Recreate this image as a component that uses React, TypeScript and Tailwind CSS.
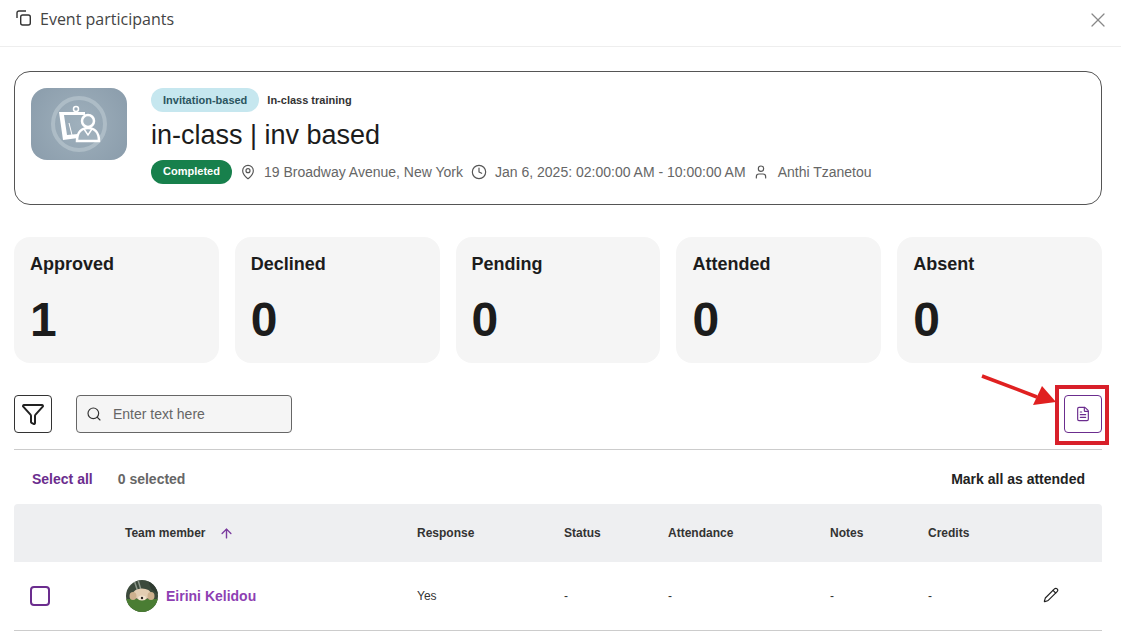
import { ArrowUp, Clock, FileText, Funnel, MapPin, Pencil, Search, User, X } from 'lucide-react';

const stats = [
  { label: 'Approved', value: 1 },
  { label: 'Declined', value: 0 },
  { label: 'Pending', value: 0 },
  { label: 'Attended', value: 0 },
  { label: 'Absent', value: 0 },
];

const tableCols = 'grid grid-cols-[111px_292px_147px_104px_162px_98px_115px_1fr] items-center';

function Thumbnail() {
  return (
    <div className="w-24 h-[72px] rounded-2xl bg-[radial-gradient(circle,#9fb0bc_0%,#8a9cab_100%)] flex items-center justify-center shrink-0">
      <svg width="60" height="60" viewBox="0 0 60 60" fill="none">
        <circle cx="30" cy="30" r="26" stroke="#adbcc6" strokeWidth="4" />
        <circle cx="27" cy="15" r="2.5" stroke="#fff" strokeWidth="1.5" />
        <path d="M10 18 L36 18 L36 21 L15 21 L18 41 L29 40 L29 44 L14 46 Z" fill="#fff" />
        <path d="M20 29 L23 41" stroke="#fff" strokeWidth="1" />
        <circle cx="39" cy="27" r="6" fill="#a4b4bf" stroke="#fff" strokeWidth="2.5" />
        <path d="M28 47 C28 38 33 34 39 34 C45 34 50 38 50 47 Z" fill="#9fb0bc" stroke="#fff" strokeWidth="2.5" />
        <path d="M35 35 L39 41 L43 35" stroke="#fff" strokeWidth="1.5" />
      </svg>
    </div>
  );
}

function Avatar() {
  return (
    <svg width="32" height="32" viewBox="0 0 32 32" className="rounded-full shrink-0">
      <rect width="32" height="32" fill="#3c4a3c" />
      <rect y="19" width="32" height="13" fill="#4a7d33" />
      <path d="M8 0 L12 12 M12 0 L15 10" stroke="#8c968a" strokeWidth="1.5" />
      <path d="M22 0 H32 V14 L25 9 Z" fill="#2f3a30" />
      <ellipse cx="16" cy="14" rx="9" ry="5.5" fill="#e3cdb2" />
      <ellipse cx="7" cy="16" rx="3.5" ry="4" fill="#cdb08e" />
      <ellipse cx="25" cy="16" rx="3.5" ry="4" fill="#cdb08e" />
      <ellipse cx="16" cy="18" rx="4" ry="2.5" fill="#f1e3cf" />
      <circle cx="16" cy="18" r="1.2" fill="#2e2320" />
    </svg>
  );
}

export default function App() {
  return (
    <div className="relative w-[1121px] h-[632px] overflow-hidden bg-white font-['Liberation_Sans',Arial,sans-serif] text-[#1c1c1c]">
      <header className="h-[47px] border-b border-[#eeeeee] pl-4 pr-[11px] pb-[9px] flex items-center justify-between">
        <div className="flex items-center gap-2">
          <svg width="16" height="16" viewBox="0 0 16 16" fill="none" stroke="#333" strokeWidth="1.4" className="-mt-[2px]">
            <rect x="4.7" y="5" width="9.6" height="10" rx="2" />
            <path d="M1 8 V3 a2 2 0 0 1 2-2 H10" />
          </svg>
          <span className="font-['Open_Sans',sans-serif] text-base text-[#444]">Event participants</span>
        </div>
        <X className="w-6 h-6 text-[#888] mt-[3px]" strokeWidth={1.25} />
      </header>

      <div className="px-[14px] pr-[19px]">
        <section className="mt-6 h-[134px] border border-[#555] rounded-2xl pl-4 pt-4 flex gap-6">
          <Thumbnail />
          <div>
            <div className="flex items-center gap-2">
              <span className="h-6 px-3 rounded-full bg-[#c6e7ef] text-[11px] font-bold text-[#2b5560] flex items-center">Invitation-based</span>
              <span className="text-[11px] font-bold text-[#333]">In-class training</span>
            </div>
            <h1 className="text-[27px] leading-8 mt-[7px] text-[#1c1c1c]">in-class | inv based</h1>
            <div className="flex items-center mt-[9px] text-sm text-[#666]">
              <span className="h-6 w-[81px] rounded-full bg-[#17804c] text-[11px] font-bold text-white flex items-center justify-center">Completed</span>
              <MapPin className="w-4 h-4 ml-2 text-[#555]" strokeWidth={1.75} />
              <span className="ml-2">19 Broadway Avenue, New York</span>
              <Clock className="w-4 h-4 ml-2 text-[#555]" strokeWidth={1.75} />
              <span className="ml-2">Jan 6, 2025: 02:00:00 AM - 10:00:00 AM</span>
              <User className="w-4 h-4 ml-2 -translate-x-[1px] text-[#555]" strokeWidth={1.75} />
              <span className="ml-2">Anthi Tzanetou</span>
            </div>
          </div>
        </section>

        <section className="grid grid-cols-5 gap-4 mt-8">
          {stats.map((s) => (
            <div key={s.label} className="h-[126px] rounded-2xl bg-[#f5f5f5] px-4 pt-[17px]">
              <div className="text-lg leading-5 font-bold">{s.label}</div>
              <div className="text-[48px] leading-[56px] font-bold mt-[18px]">{s.value}</div>
            </div>
          ))}
        </section>

        <section className="flex items-center justify-between mt-8">
          <div className="flex items-center gap-6">
            <button className="w-[38px] h-[38px] border border-[#333] rounded flex items-center justify-center">
              <Funnel className="w-6 h-6 text-[#222]" strokeWidth={2} />
            </button>
            <div className="w-[216px] h-[38px] border border-[#666] rounded bg-[#f5f5f5] flex items-center pl-[9px] gap-[11px]">
              <Search className="w-4 h-4 text-[#333]" strokeWidth={1.75} />
              <span className="text-sm text-[#666]">Enter text here</span>
            </div>
          </div>
          <button className="w-[38px] h-[38px] border border-[#6b2d8e] rounded flex items-center justify-center">
            <FileText className="w-4 h-4 text-[#6b2d8e]" strokeWidth={1.75} />
          </button>
        </section>

        <div className="border-b border-[#cccccc] mt-4" />

        <section className="h-[54px] pt-1 pl-[18px] pr-[17px] flex items-center text-sm font-bold">
          <span className="text-[#6b2d8e]">Select all</span>
          <span className="ml-[25px] text-[#666]">0 selected</span>
          <span className="ml-auto text-[#222]">Mark all as attended</span>
        </section>

        <section className={`${tableCols} h-[58px] bg-[#eeeff1] rounded-t text-xs font-bold text-[#333]`}>
          <div />
          <div className="flex items-center gap-[14px]">
            Team member
            <ArrowUp className="w-[15px] h-[15px] text-[#7a3a9e]" strokeWidth={2.25} />
          </div>
          <div>Response</div>
          <div>Status</div>
          <div>Attendance</div>
          <div>Notes</div>
          <div>Credits</div>
          <div />
        </section>

        <section className={`${tableCols} h-[69px] border-b border-[#cccccc] text-xs text-[#333]`}>
          <div className="pl-4">
            <div className="w-5 h-5 rounded border-2 border-[#6b2d8e]" />
          </div>
          <div className="flex items-center gap-2 pl-px">
            <Avatar />
            <span className="text-sm font-bold text-[#8e3fb3]">Eirini Kelidou</span>
          </div>
          <div>Yes</div>
          <div>-</div>
          <div>-</div>
          <div>-</div>
          <div>-</div>
          <div>
            <Pencil className="w-4 h-4 -mt-0.5 text-[#222]" strokeWidth={1.75} />
          </div>
        </section>
      </div>

      {/* red annotation over the export button */}
      <svg className="absolute left-[975px] top-[370px]" width="90" height="45" viewBox="0 0 90 45" fill="none">
        <path d="M7 6 L62 27" stroke="#e02020" strokeWidth="3.5" />
        <path d="M58 35 L81 32 L67 16 Z" fill="#e02020" />
      </svg>
      <div className="absolute left-[1055px] top-[385px] w-[54px] h-[60px] border-4 border-[#d8202a]" />
    </div>
  );
}
